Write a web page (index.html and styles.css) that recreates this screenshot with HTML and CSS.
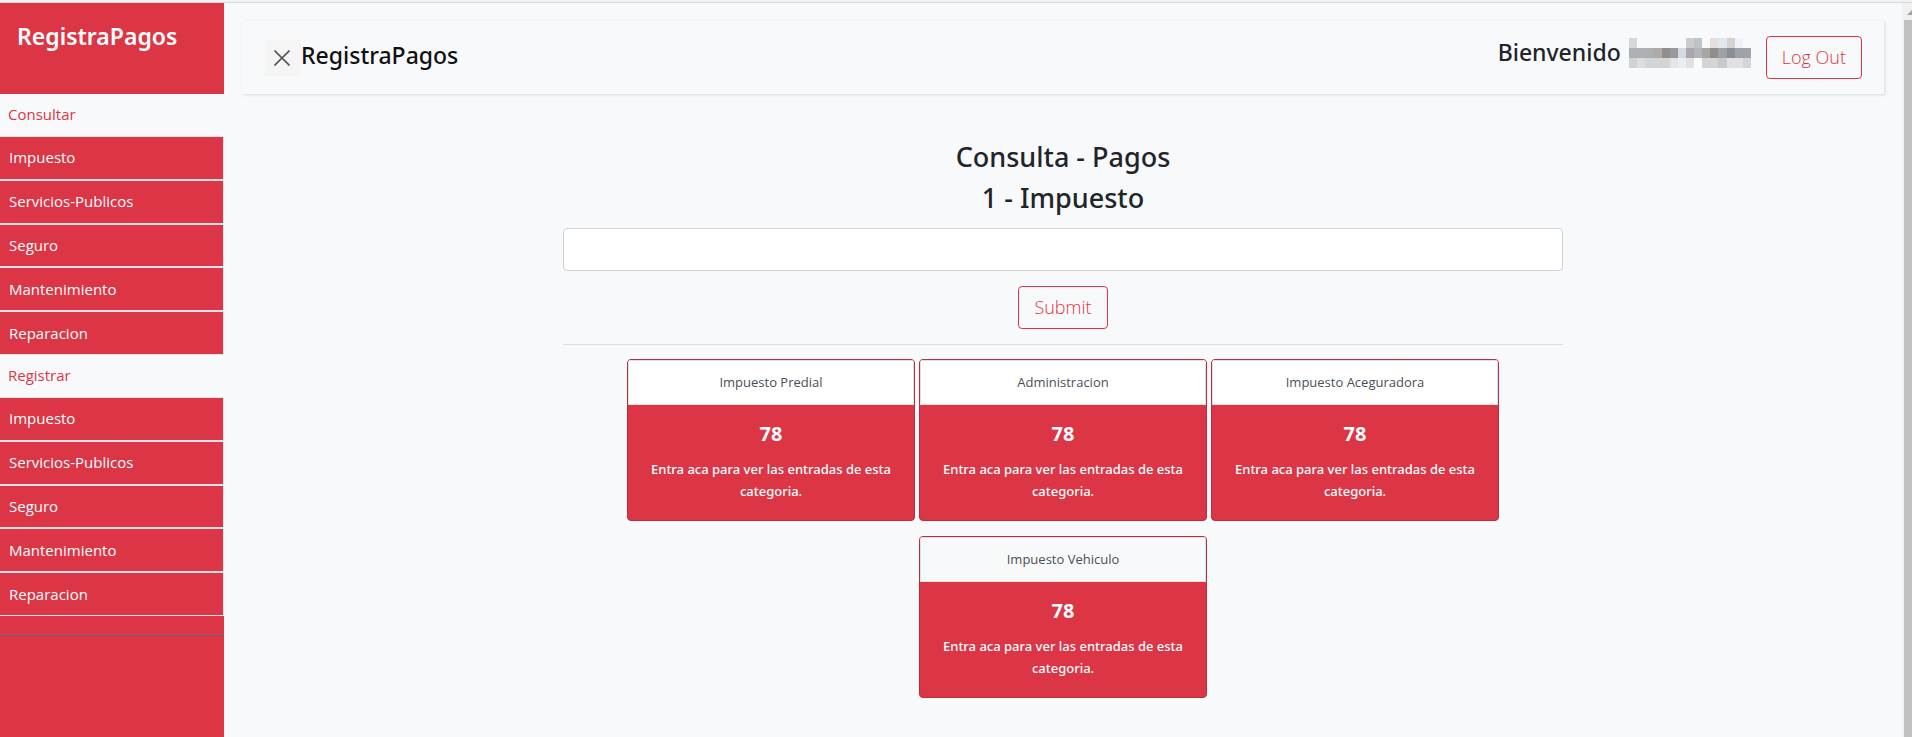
FILE: index.html
```html
<!DOCTYPE html>
<html lang="es">
<head>
<meta charset="utf-8">
<title>RegistraPagos</title>
<link rel="stylesheet" href="styles.css">
</head>
<body>
<div class="app">
  <aside class="sidebar">
    <h4 class="brand">RegistraPagos</h4>
    <nav>
      <p class="nav-title">Consultar</p>
      <ul class="nav-list">
        <li><a href="#">Impuesto</a></li>
        <li><a href="#">Servicios-Publicos</a></li>
        <li><a href="#">Seguro</a></li>
        <li><a href="#">Mantenimiento</a></li>
        <li><a href="#">Reparacion</a></li>
      </ul>
      <p class="nav-title">Registrar</p>
      <ul class="nav-list">
        <li><a href="#">Impuesto</a></li>
        <li><a href="#">Servicios-Publicos</a></li>
        <li><a href="#">Seguro</a></li>
        <li><a href="#">Mantenimiento</a></li>
        <li><a href="#">Reparacion</a></li>
      </ul>
    </nav>
    <hr class="nav-end">
  </aside>
  <div class="page">
    <header class="topbar">
      <div class="topbar-left">
        <button class="toggle" type="button" aria-label="Cerrar menu">
          <svg width="16" height="16" viewBox="0 0 16 16" fill="none" stroke="#555" stroke-width="1.6"><path d="M.5.5l15 15M15.500.5L.5 15.500"/></svg>
        </button>
        <h4 class="topbar-title">RegistraPagos</h4>
      </div>
      <div class="topbar-right">
        <h4 class="welcome">Bienvenido</h4>
        <svg class="user" width="122" height="30" viewBox="0 0 122 30" shape-rendering="crispEdges" aria-hidden="true">
          <path fill="#d6d8da" d="M0 0h8v10H0z"/><path fill="#cdcdce" d="M57 0h8v10h-8z"/><path fill="#bfc3c7" d="M65 0h8v10h-8z"/><path fill="#e6dfde" d="M81 0h8v10h-8z"/><path fill="#dfe8ef" d="M89 0h9v10h-9z"/><path fill="#d6d2d4" d="M98 0h8v10h-8z"/><path fill="#eff3f7" d="M106 0h8v10h-8z"/>
          <path fill="#acb0b3" d="M0 10h24v10H0z"/><path fill="#adaaa8" d="M24 10h9v10h-9z"/><path fill="#908f8e" d="M33 10h8v10h-8z"/><path fill="#98989d" d="M41 10h8v10h-8z"/><path fill="#d3dae5" d="M49 10h8v10h-8z"/><path fill="#a9a8ac" d="M57 10h8v10h-8z"/><path fill="#b1b6ba" d="M65 10h8v10h-8z"/><path fill="#a8a5a2" d="M73 10h8v10h-8z"/><path fill="#8f8e8b" d="M81 10h8v10h-8z"/><path fill="#9ca2a6" d="M89 10h9v10h-9z"/><path fill="#8c8d92" d="M98 10h8v10h-8z"/><path fill="#9da3a6" d="M106 10h16v10h-16z"/>
          <path fill="#d0d3d6" d="M0 20h8v10H0z"/><path fill="#dededc" d="M8 20h8v10H8z"/><path fill="#d4d5d6" d="M16 20h25v10H16z"/><path fill="#e3e5e8" d="M41 20h8v10h-8z"/><path fill="#e9eef1" d="M49 20h8v10h-8z"/><path fill="#e1e1e3" d="M57 20h8v10h-8z"/><path fill="#fafbfb" d="M65 20h8v10h-8z"/><path fill="#d4d5d7" d="M73 20h16v10H73z"/><path fill="#c6cacc" d="M89 20h9v10h-9z"/><path fill="#e1e1e3" d="M98 20h16v10H98z"/><path fill="#d3d5da" d="M114 20h8v10h-8z"/>
        </svg>
        <button class="btn" type="button">Log Out</button>
      </div>
    </header>
    <main class="content">
      <h3 class="heading">Consulta - Pagos</h3>
      <h3 class="heading">1 - Impuesto</h3>
      <form class="search">
        <input class="field" type="text" aria-label="Buscar pago">
        <button class="btn" type="submit">Submit</button>
      </form>
      <hr class="divider">
      <div class="cards">
        <a class="card" href="#">
          <span class="card-head">Impuesto Predial</span>
          <span class="card-body"><strong class="count">78</strong><span class="note">Entra aca para ver las entradas de esta categoria.</span></span>
        </a>
        <a class="card" href="#">
          <span class="card-head">Administracion</span>
          <span class="card-body"><strong class="count">78</strong><span class="note">Entra aca para ver las entradas de esta categoria.</span></span>
        </a>
        <a class="card" href="#">
          <span class="card-head">Impuesto Aceguradora</span>
          <span class="card-body"><strong class="count">78</strong><span class="note">Entra aca para ver las entradas de esta categoria.</span></span>
        </a>
        <a class="card card-current" href="#">
          <span class="card-head">Impuesto Vehiculo</span>
          <span class="card-body"><strong class="count">78</strong><span class="note">Entra aca para ver las entradas de esta categoria.</span></span>
        </a>
      </div>
    </main>
  </div>
  <div class="scrollbar" aria-hidden="true">
    <svg class="arrow" width="10" height="5" viewBox="0 0 10 5"><path fill="#a3a3a3" d="M5 0l5 5H0z"/></svg>
    <div class="thumb"></div>
  </div>
</div>
</body>
</html>
```

FILE: styles.css
```css
* { box-sizing: border-box; }

body {
  margin: 0;
  background: #f8f9fb;
  color: #212529;
  font-family: "Open Sans", "Noto Sans", sans-serif;
  font-size: 15px;
  line-height: 24px;
}

h3, h4, p, ul { margin: 0; padding: 0; font-weight: 500; }
h3, h4 { font-family: "Noto Sans", "Open Sans", sans-serif; }
ul { list-style: none; }
a { color: inherit; text-decoration: none; }

.app {
  display: grid;
  grid-template-columns: 224px 1fr 10px;
  min-height: 100vh;
  padding-top: 3px;
  background: linear-gradient(#f1f2f3 0 2px, #d5d8db 2px 3px, transparent 3px);
  overflow: hidden;
}

/* Sidebar */
.sidebar { background: #dc3545; }

.brand {
  height: 91px;
  padding: 17px;
  color: #fff;
  font-size: 23px;
  font-weight: 600;
  line-height: 32px;
}

.nav-title {
  padding: 8px 8px 10px;
  background: #f8f9fb;
  color: #dc3545;
  font-weight: 400;
}

.nav-list {
  display: grid;
  grid-auto-rows: 1fr;
  min-height: 219px;
  color: #fff;
}

.nav-list a {
  display: flex;
  align-items: center;
  height: 100%;
  padding: 0 8px 1px 9px;
  border: solid #dee2e6;
  border-width: 1px 1px 1px 0;
}

.nav-end {
  margin: 18px 0 0;
  border: 0;
  border-top: 1px solid #6c6d85;
}

/* Page */
.page { padding: 18px; }

.topbar {
  display: flex;
  justify-content: space-between;
  min-height: 73px;
  padding: 15px 22px 15px 23px;
  box-shadow: 1px 1px 3px rgba(0, 0, 0, 0.12);
}

.topbar-left, .topbar-right { display: flex; align-items: flex-start; }

.toggle {
  display: grid;
  place-items: center;
  width: 36px;
  height: 36px;
  margin-top: 4px;
  padding: 0 2px 0 0;
  border: 0;
  background: #f5f5f5;
}

.topbar-title, .welcome {
  font-size: 23px;
  line-height: 32px;
}

.topbar-title { padding-top: 3px; color: #111; }
.user { margin: 2px 15px 0 8px; }

.btn {
  height: 43px;
  padding: 0 15px 2px;
  border: 1px solid #dc3545;
  border-radius: 4px;
  background: transparent;
  color: #dc3545;
  font-family: inherit;
  font-size: 18px;
  font-weight: 300;
}

.content {
  display: flex;
  flex-direction: column;
  align-items: center;
  max-width: 1000px;
  margin: 42px auto 0;
}

.heading {
  font-size: 27px;
  line-height: 41px;
}

.search {
  display: flex;
  flex-direction: column;
  align-items: center;
  gap: 15px;
  width: 100%;
  margin-top: 10px;
}

.field {
  width: 100%;
  height: 43px;
  padding: 0 12px;
  border: 1px solid #ced4da;
  border-radius: 4px;
  background: #fff;
  font: inherit;
}

.divider {
  width: 100%;
  margin: 15px 0 14px;
  border: 0;
  border-top: 1px solid #dcdee1;
}

.cards {
  display: flex;
  flex-wrap: wrap;
  justify-content: center;
  gap: 15px 4px;
  width: 100%;
  padding: 0 60px;
}

.card {
  width: 288px;
  border: 1px solid #be2d3b;
  border-radius: 4px;
  overflow: hidden;
  background: #dc3545;
  color: #fff;
  font-size: 13px;
  line-height: 22px;
  text-align: center;
}

.card-head, .card-body, .count, .note { display: block; }

.card-head {
  padding: 10px 16px 11px;
  border: 1px solid #dee2e6;
  background: #fff;
  color: #495057;
}

.card-current .card-head { background: #f8f9fb; }
.card-body { padding: 16px 20px 18px; }

.count {
  margin-bottom: 11px;
  font-size: 20px;
  font-weight: 700;
  line-height: 26px;
}

.note {
  font-family: "Noto Sans", "Open Sans", sans-serif;
  font-weight: 500;
}

/* Scroll track */
.scrollbar {
  display: flex;
  flex-direction: column;
  background: #f1f1f1;
}

.arrow { align-self: flex-end; margin: 7px -5px 5px 0; }

.thumb {
  flex: 1;
  margin-left: 2px;
  background: #c1c1c1;
}
```
